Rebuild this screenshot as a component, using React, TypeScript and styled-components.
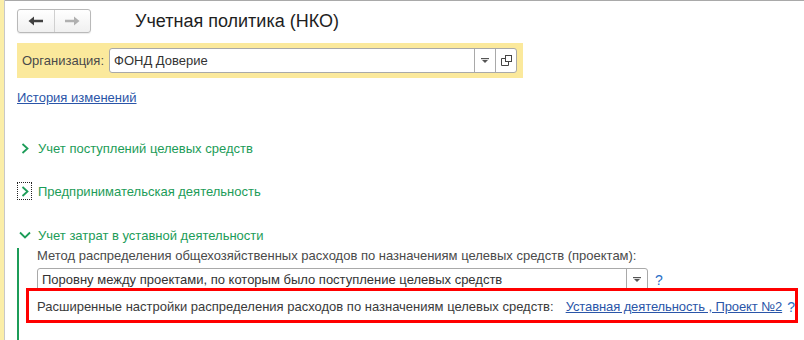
import React from "react";
import styled, { createGlobalStyle } from "styled-components";

const Global = createGlobalStyle`
  html, body { margin: 0; padding: 0; background: #fff; }
  body { font-family: Arial, "Liberation Sans", sans-serif; font-size: 13px; color: #4d4d4d; }
  #root { width: 804px; height: 340px; overflow: hidden; }
`;

const Page = styled.div`
  display: flex;
  width: 804px;
  height: 340px;
  background: #fff;
`;

const LeftStripe = styled.div`
  width: 4px;
  flex: none;
  background: #fbeea8;
  border-right: 1px solid #c8c8c8;
`;

const Main = styled.div`
  flex: 1;
  display: flex;
  flex-direction: column;
  min-width: 0;
`;

const TopBar = styled.div`
  display: flex;
  height: 1px;
  border-bottom: 1px solid #a9a9a9;
`;

const TopSeg = styled.div<{ $w: number }>`
  width: ${(p) => p.$w}px;
  flex: none;
  border-right: 1px solid #a9a9a9;
`;

const Content = styled.div`
  padding-left: 12px;
  display: flex;
  flex-direction: column;
`;

const Header = styled.div`
  display: flex;
  align-items: center;
  margin-top: 8px;
  height: 24px;
`;

const NavGroup = styled.div`
  display: flex;
  width: 74px;
  height: 24px;
  box-sizing: border-box;
  border: 1px solid #b9b9b9;
  border-radius: 3px;
  background: linear-gradient(#ffffff, #f0f0f0);
  box-shadow: 0 1px 1px rgba(0, 0, 0, 0.08);
`;

const NavButton = styled.div<{ $divider?: boolean }>`
  flex: 1;
  display: flex;
  align-items: center;
  justify-content: center;
  border-left: ${(p) => (p.$divider ? "1px solid #d0d0d0" : "none")};
`;

const Title = styled.div`
  margin-left: 44px;
  font-size: 18px;
  color: #1e1e1e;
  line-height: 22px;
`;

const OrgBar = styled.div`
  display: flex;
  align-items: center;
  width: 506px;
  height: 35px;
  box-sizing: border-box;
  margin-top: 10px;
  padding: 0 6px 0 5px;
  background: #fbe99c;
`;

const Label = styled.span`
  color: #4a4a4a;
  font-size: 13px;
  white-space: nowrap;
`;

const InputBox = styled.div<{ $w?: number; $h?: number }>`
  display: flex;
  height: ${(p) => p.$h ?? 25}px;
  box-sizing: border-box;
  border: 1px solid #a9a9a9;
  border-radius: 3px;
  background: #fff;
  flex: ${(p) => (p.$w ? "none" : "1")};
  width: ${(p) => (p.$w ? `${p.$w}px` : "auto")};
`;

const InputText = styled.div`
  flex: 1;
  padding-left: 4px;
  display: flex;
  align-items: center;
  color: #333;
  font-size: 13px;
  white-space: nowrap;
  overflow: hidden;
`;

const InputButton = styled.div`
  width: 20px;
  flex: none;
  display: flex;
  align-items: center;
  justify-content: center;
  border-left: 1px solid #a9a9a9;
`;

const HistoryLink = styled.a`
  margin-top: 12px;
  align-self: flex-start;
  line-height: 16px;
  color: #2a55a8;
  text-decoration: underline;
  font-size: 13px;
  cursor: pointer;
`;

const SectionHeader = styled.div<{ $mt: number }>`
  display: flex;
  align-items: center;
  height: 20px;
  margin-top: ${(p) => p.$mt}px;
  color: #1c9c58;
  font-size: 13px;
  white-space: nowrap;
`;

const ChevronBox = styled.div<{ $focused?: boolean }>`
  width: 15px;
  height: 18px;
  margin-right: 6px;
  display: flex;
  align-items: center;
  justify-content: center;
  box-sizing: border-box;
  outline: ${(p) => (p.$focused ? "1px dotted #222" : "none")};
  outline-offset: -1px;
`;

const GroupBody = styled.div`
  margin-top: 3px;
  border-left: 2px solid #1c9c58;
  padding-left: 18px;
  height: 120px;
  display: flex;
  flex-direction: column;
`;

const MethodLabel = styled.div`
  line-height: 16px;
  color: #4a4a4a;
  font-size: 13px;
  white-space: nowrap;
`;

const FieldRow = styled.div`
  display: flex;
  align-items: center;
  margin-top: 4px;
  height: 23px;
`;

const Help = styled.span`
  color: #2a6fc7;
  font-size: 14px;
  margin-left: 7px;
`;

const AdvancedRow = styled.div`
  position: relative;
  display: flex;
  align-items: center;
  height: 31px;
  white-space: nowrap;
`;

const AdvLabel = styled.span`
  color: #3a3a3a;
  font-size: 13px;
`;

const AdvLink = styled.a`
  margin-left: 12px;
  color: #2a55a8;
  text-decoration: underline;
  font-size: 13px;
  letter-spacing: -0.1px;
  cursor: pointer;
`;

const AdvHelp = styled(Help)`
  margin-left: 5px;
`;

const RedFrame = styled.div`
  position: absolute;
  left: -11px;
  top: -3px;
  width: 772px;
  height: 35px;
  box-sizing: border-box;
  border: 3px solid #ff0000;
  pointer-events: none;
`;

const ChevronRight = () => (
  <svg width="8" height="11" viewBox="0 0 8 11">
    <path d="M1.5 1 L6.5 5.5 L1.5 10" fill="none" stroke="#1c9c58" strokeWidth="1.8" />
  </svg>
);

const ChevronDown = () => (
  <svg width="12" height="8" viewBox="0 0 12 8">
    <path d="M1 1.5 L6 6.5 L11 1.5" fill="none" stroke="#1c9c58" strokeWidth="1.8" />
  </svg>
);

const ArrowLeft = ({ color }: { color: string }) => (
  <svg width="16" height="10" viewBox="0 0 16 10">
    <path d="M0.5 5 L6 0.5 L6 3.8 L15 3.8 L15 6.2 L6 6.2 L6 9.5 Z" fill={color} />
  </svg>
);

const ArrowRight = ({ color }: { color: string }) => (
  <svg width="16" height="10" viewBox="0 0 16 10">
    <path d="M15.5 5 L10 0.5 L10 3.8 L1 3.8 L1 6.2 L10 6.2 L10 9.5 Z" fill={color} />
  </svg>
);

const DropIcon = () => (
  <svg width="8" height="6" viewBox="0 0 8 6">
    <rect x="0" y="0" width="8" height="1.2" fill="#555" />
    <path d="M1 2 L7 2 L4 5 Z" fill="#555" />
  </svg>
);

const OpenIcon = () => (
  <svg width="11" height="11" viewBox="0 0 11 11">
    <rect x="4.5" y="0.5" width="6" height="6" fill="none" stroke="#444" strokeWidth="1" />
    <path d="M4.5 3.5 H0.5 V10.5 H7.5 V6.5" fill="none" stroke="#444" strokeWidth="1" />
  </svg>
);

export default function App() {
  return (
    <Page>
      <Global />
      <LeftStripe />
      <Main>
        <TopBar>
          <TopSeg $w={65} />
          <TopSeg $w={142} />
          <TopSeg $w={208} />
          <TopSeg $w={224} />
        </TopBar>
        <Content>
          <Header>
            <NavGroup>
              <NavButton>
                <ArrowLeft color="#404040" />
              </NavButton>
              <NavButton $divider>
                <ArrowRight color="#b0b0b0" />
              </NavButton>
            </NavGroup>
            <Title>Учетная политика (НКО)</Title>
          </Header>

          <OrgBar>
            <Label>Организация:</Label>
            <InputBox style={{ marginLeft: 5 }}>
              <InputText>ФОНД Доверие</InputText>
              <InputButton>
                <DropIcon />
              </InputButton>
              <InputButton>
                <OpenIcon />
              </InputButton>
            </InputBox>
          </OrgBar>

          <HistoryLink>История изменений</HistoryLink>

          <SectionHeader $mt={32}>
            <ChevronBox>
              <ChevronRight />
            </ChevronBox>
            Учет поступлений целевых средств
          </SectionHeader>

          <SectionHeader $mt={23}>
            <ChevronBox $focused>
              <ChevronRight />
            </ChevronBox>
            Предпринимательская деятельность
          </SectionHeader>

          <SectionHeader $mt={24}>
            <ChevronBox>
              <ChevronDown />
            </ChevronBox>
            Учет затрат в уставной деятельности
          </SectionHeader>

          <GroupBody>
            <MethodLabel>
              Метод распределения общехозяйственных расходов по назначениям целевых средств (проектам):
            </MethodLabel>
            <FieldRow>
              <InputBox $w={611} $h={23}>
                <InputText>Поровну между проектами, по которым было поступление целевых средств</InputText>
                <InputButton>
                  <DropIcon />
                </InputButton>
              </InputBox>
              <Help>?</Help>
            </FieldRow>
            <AdvancedRow>
              <RedFrame />
              <AdvLabel>
                Расширенные настройки распределения расходов по назначениям целевых средств:
              </AdvLabel>
              <AdvLink>Уставная деятельность , Проект №2</AdvLink>
              <AdvHelp>?</AdvHelp>
            </AdvancedRow>
          </GroupBody>
        </Content>
      </Main>
    </Page>
  );
}
